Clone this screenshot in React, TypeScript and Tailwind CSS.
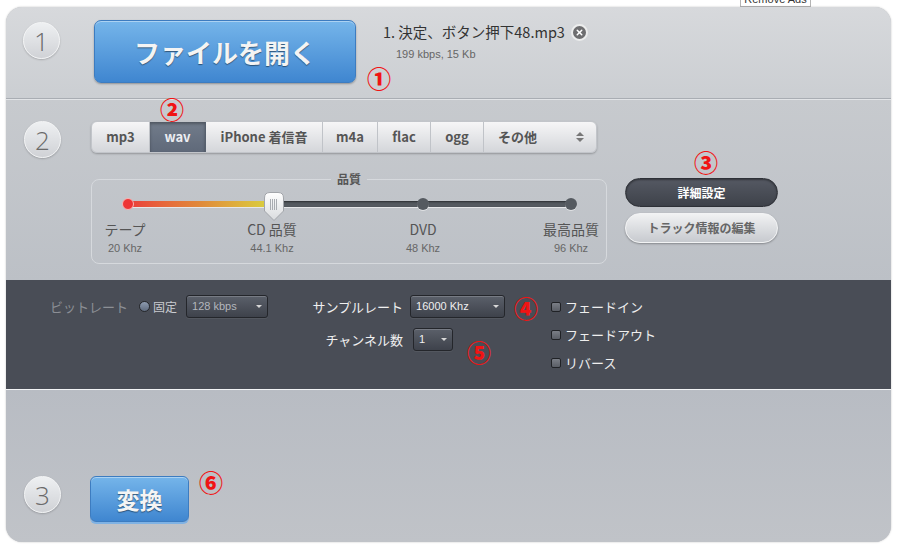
import { X } from "lucide-react"

const FORMATS = [
    { name: 'mp3', w: 'w-[58px]' },
    { name: 'wav', w: 'w-[56px]', active: true },
    { name: 'iPhone 着信音', w: 'w-[117px]' },
    { name: 'm4a', w: 'w-[55px]' },
    { name: 'flac', w: 'w-[53px]' },
    { name: 'ogg', w: 'w-[53px]' },
]

const QUALITY = [
    { label: 'テープ', khz: '20 Khz', x: 33 },
    { label: 'CD 品質', khz: '44.1 Khz', x: 180 },
    { label: 'DVD', khz: '48 Khz', x: 331 },
    { label: '最高品質', khz: '96 Khz', x: 479 },
]

const StepBadge = ({ n }: { n: number }) => (
    <div className="flex h-[37px] w-[37px] shrink-0 items-center justify-center rounded-full border border-[#f3f4f5] bg-linear-to-b from-[#eef0f2] to-[#d0d2d6] font-['Open_Sans'] text-[26px] font-light leading-none text-[#6a6a6a] shadow-[0_1px_2px_rgba(0,0,0,0.2)]">
        {n}
    </div>
)

const Mark = ({ children, className }: { children: string; className: string }) => (
    <span className={`absolute text-[24px] font-black leading-none text-[#f01414] ${className}`}>{children}</span>
)

const DarkSelect = ({ value, className, dim }: { value: string; className: string; dim?: boolean }) => (
    <div className={`flex h-[23px] items-center justify-between rounded-[3px] border border-[#24262b] bg-linear-to-b from-[#5b606a] to-[#3e424b] px-[5px] shadow-[inset_0_1px_0_rgba(255,255,255,0.18),0_1px_0_rgba(255,255,255,0.06)] ${className}`}>
        <span className={`font-['Liberation_Sans'] text-[11px] ${dim ? 'text-[#b4b7bd]' : 'text-[#f0f0f0]'}`}>{value}</span>
        <span className="h-0 w-0 border-x-[3px] border-t-[3px] border-x-transparent border-t-[#d8d8d8]" />
    </div>
)

const Check = ({ label }: { label: string }) => (
    <div className="flex h-[28px] items-center gap-[4px]">
        <span className="h-[10px] w-[10px] rounded-[2px] border border-[#202226] bg-linear-to-b from-[#7a7e86] to-[#5a5e66]" />
        <span className="text-[13px] text-[#eeeeee]">{label}</span>
    </div>
)

const App = () => {
    return <div className="relative h-[557px] w-[903px] overflow-hidden bg-white font-['Noto_Sans_CJK_JP',sans-serif]">
        <div className="absolute left-[740px] top-[-8px] flex h-[15px] w-[71px] items-center justify-center border border-[#b5b5b5] bg-white font-['Liberation_Sans'] text-[11px] leading-none text-[#333]">
            Remove Ads
        </div>

        <div className="relative ml-[6px] mt-[7px] h-[535px] w-[885px] overflow-hidden rounded-[16px] bg-[#c4c7cc] shadow-[0_0_2px_rgba(0,0,0,0.25)]">
            {/* step 1 */}
            <section className="flex h-[93px] border-b border-[#e2e4e7] bg-linear-to-b from-[#d7d9dc] to-[#cbced2] pl-[17px] pt-[15px] shadow-[inset_0_-1px_0_#a9adb3]">
                <StepBadge n={1} />
                <button className="ml-[34px] mt-[-2px] flex h-[63px] w-[262px] items-center justify-center rounded-[7px] border border-[#3d7cc0] bg-linear-to-b from-[#75b5ea] to-[#3f86d0] text-[26px] font-bold text-[#f4f4f4] shadow-[inset_0_1px_0_rgba(255,255,255,0.4),0_1px_2px_rgba(0,0,0,0.3)] [text-shadow:0_1px_1px_rgba(0,0,0,0.45)]">
                    ファイルを開く
                </button>
                <div className="ml-[27px] flex flex-col">
                    <div className="flex h-[20px] items-center gap-[6px] text-[14.5px] text-[#333]">
                        <span>1. 決定、ボタン押下48.mp3</span>
                        <span className="flex h-[17px] w-[17px] items-center justify-center rounded-full border-2 border-[#eceded] bg-[#6e6e70]">
                            <X size={9} strokeWidth={4} color="#ffffff" />
                        </span>
                    </div>
                    <div className="ml-[13px] mt-[4px] font-['Liberation_Sans'] text-[11px] text-[#666]">199 kbps, 15 Kb</div>
                </div>
            </section>

            {/* step 2 */}
            <section className="flex h-[180px] bg-linear-to-b from-[#c7cace] to-[#bcc0c6] pl-[18px] pt-[21px]">
                <StepBadge n={2} />
                <div className="ml-[30px] flex w-[516px] flex-col">
                    <div className="flex h-[32px] w-[506px] overflow-hidden rounded-[6px] border border-[#c2c5ca] bg-linear-to-b from-[#f6f6f7] to-[#d4d6da] shadow-[0_1px_2px_rgba(0,0,0,0.25)]">
                        {FORMATS.map((f) => (
                            <div
                                key={f.name}
                                className={`flex h-full items-center justify-center border-r text-[13px] font-bold ${f.w} ${f.active ? 'border-[#56606e] bg-linear-to-b from-[#727c8b] to-[#5f6979] text-[#eceef2] shadow-[inset_0_2px_3px_rgba(0,0,0,0.3)]' : 'border-[#c0c3c8] text-[#555]'}`}
                            >
                                {f.name}
                            </div>
                        ))}
                        <div className="flex flex-1 items-center justify-between pl-[14px] pr-[12px] text-[13px] font-bold text-[#555]">
                            <span>その他</span>
                            <span className="flex flex-col gap-[2px]">
                                <span className="h-0 w-0 border-x-[4px] border-b-[4px] border-x-transparent border-b-[#777]" />
                                <span className="h-0 w-0 border-x-[4px] border-t-[4px] border-x-transparent border-t-[#777]" />
                            </span>
                        </div>
                    </div>

                    <fieldset className="mt-[18px] w-[516px] rounded-[8px] border border-[#d6d9dd]">
                        <legend className="mx-auto px-[6px] text-[12px] font-bold leading-[16px] text-[#555]">品質</legend>
                        <div className="relative h-[76px]">
                            <div className="absolute left-[36px] top-[14px] h-[6px] w-[443px] rounded-full bg-[#555a60] shadow-[inset_0_1px_2px_rgba(0,0,0,0.5),0_1px_0_rgba(255,255,255,0.6)]" />
                            <div className="absolute left-[36px] top-[14px] h-[6px] w-[146px] rounded-l-full bg-linear-to-r from-[#ea3b3b] via-[#e08a3a] to-[#d7d43e]" />
                            <div className="absolute left-[30px] top-[11px] h-[12px] w-[12px] rounded-full border border-[#f6b4b4] bg-[#ee3434]" />
                            <div className="absolute left-[325px] top-[11px] h-[12px] w-[12px] rounded-full bg-[#555a60] shadow-[0_1px_0_rgba(255,255,255,0.5)]" />
                            <div className="absolute left-[473px] top-[11px] h-[12px] w-[12px] rounded-full bg-[#555a60] shadow-[0_1px_0_rgba(255,255,255,0.5)]" />
                            <svg className="absolute left-[171px] top-[4px]" width="22" height="31" viewBox="0 0 22 31">
                                <defs>
                                    <linearGradient id="thumb" x1="0" y1="0" x2="0" y2="1">
                                        <stop offset="0" stopColor="#ffffff" />
                                        <stop offset="1" stopColor="#d9dbde" />
                                    </linearGradient>
                                </defs>
                                <path d="M1.5 7 Q1.5 1.5 7 1.5 H15 Q20.5 1.5 20.5 7 V20 L11 29.5 L1.5 20 Z" fill="url(#thumb)" stroke="#a2a5aa" />
                                <path d="M7.5 8 V19 M9.5 8 V19 M11.5 8 V19 M13.5 8 V19" stroke="#a9acb1" strokeWidth="1" />
                            </svg>
                            {QUALITY.map((q) => (
                                <div key={q.label} className="absolute top-[33px] flex w-[80px] -translate-x-1/2 flex-col items-center" style={{ left: q.x }}>
                                    <span className="text-[14px] leading-[18px] text-[#555]">{q.label}</span>
                                    <span className="mt-[3px] font-['Liberation_Sans'] text-[11px] leading-[14px] text-[#666]">{q.khz}</span>
                                </div>
                            ))}
                        </div>
                    </fieldset>
                </div>
                <div className="ml-[18px] mt-[57px] flex w-[153px] flex-col gap-[6px]">
                    <button className="flex h-[29px] items-center justify-center rounded-full border border-[#2e3137] bg-linear-to-b from-[#555963] to-[#3e424a] text-[12px] font-bold text-white shadow-[inset_0_1px_2px_rgba(0,0,0,0.4)]">
                        詳細設定
                    </button>
                    <button className="flex h-[30px] items-center justify-center rounded-full border border-[#f2f3f4] bg-linear-to-b from-[#f1f2f3] to-[#c7cacf] text-[12px] font-bold text-[#666] shadow-[0_1px_2px_rgba(0,0,0,0.3)]">
                        トラック情報の編集
                    </button>
                </div>
            </section>

            {/* advanced settings */}
            <section className="flex h-[110px] items-start border-b border-[#f2f3f5] bg-[#494d56]">
                <div className="ml-[44px] mt-[15px] flex h-[23px] items-center">
                    <span className="text-[13px] text-[#8c8f95]">ビットレート</span>
                    <span className="ml-[11px] h-[11px] w-[11px] rounded-full border border-[#26282c] bg-linear-to-b from-[#8e9bb0] to-[#5f6b7e]" />
                    <span className="ml-[3px] text-[12px] text-[#c9cbd0]">固定</span>
                    <DarkSelect value="128 kbps" className="ml-[9px] w-[82px]" dim />
                </div>
                <div className="ml-[19px] mt-[15px] grid grid-cols-[116px_auto] items-center gap-x-[7px] gap-y-[10px]">
                    <span className="text-right text-[13px] text-[#f0f0f0]">サンプルレート</span>
                    <DarkSelect value="16000 Khz" className="w-[95px]" />
                    <span className="text-right text-[13px] text-[#f0f0f0]">チャンネル数</span>
                    <DarkSelect value="1" className="ml-[3px] w-[40px]" />
                </div>
                <div className="ml-[46px] mt-[13px] flex flex-col">
                    <Check label="フェードイン" />
                    <Check label="フェードアウト" />
                    <Check label="リバース" />
                </div>
            </section>

            {/* step 3 */}
            <section className="flex h-[152px] items-start bg-linear-to-b from-[#b8bcc3] to-[#c0c3c8] pl-[18px] pt-[86px]">
                <StepBadge n={3} />
                <button className="ml-[29px] flex h-[46px] w-[99px] items-center justify-center rounded-[6px] border border-[#3d7cc0] bg-linear-to-b from-[#75b5ea] to-[#3f86d0] text-[23px] font-bold text-[#f4f4f4] shadow-[inset_0_1px_0_rgba(255,255,255,0.4),0_2px_0_#7fb2e4] [text-shadow:0_1px_1px_rgba(0,0,0,0.45)]">
                    変換
                </button>
            </section>

            <Mark className="left-[361px] top-[59px]">①</Mark>
            <Mark className="left-[154px] top-[90px]">②</Mark>
            <Mark className="left-[688px] top-[143px]">③</Mark>
            <Mark className="left-[508px] top-[289px]">④</Mark>
            <Mark className="left-[461px] top-[333px]">⑤</Mark>
            <Mark className="left-[193px] top-[463px]">⑥</Mark>
        </div>
    </div>
}

export default App
